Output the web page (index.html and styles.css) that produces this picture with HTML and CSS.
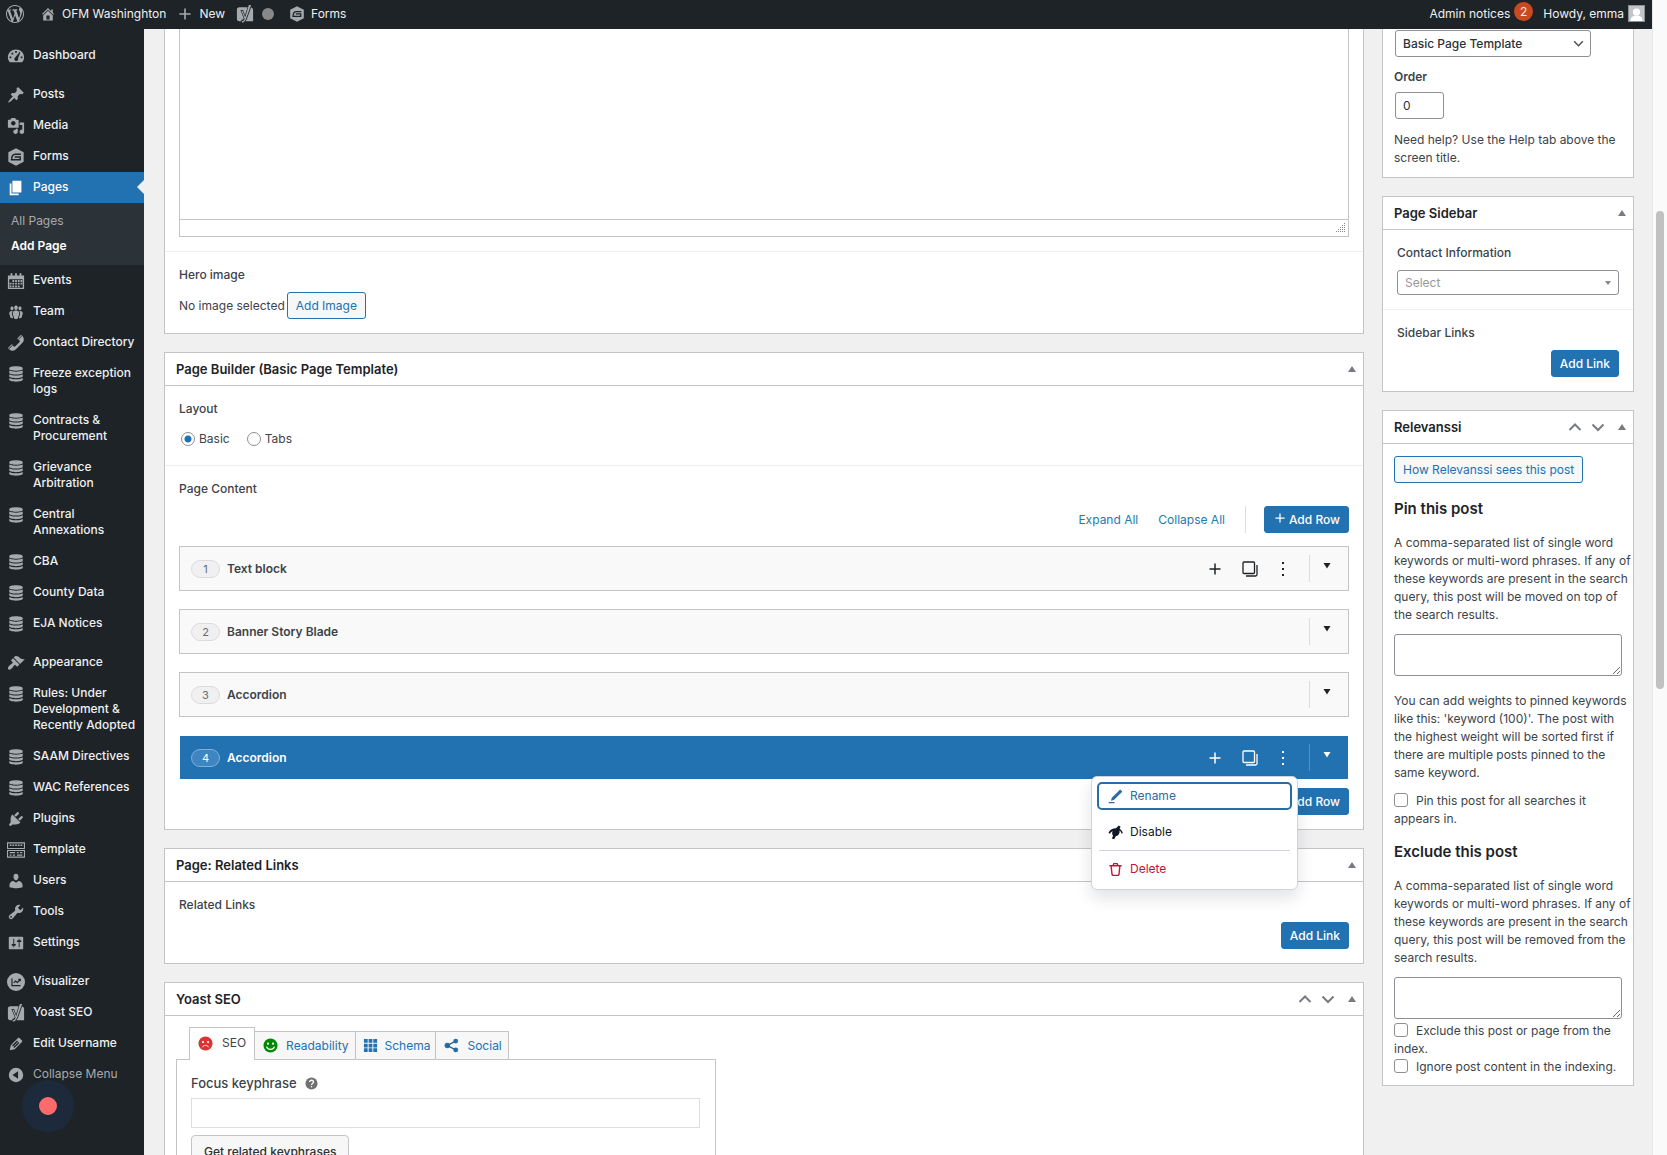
FILE: index.html
```html
<!DOCTYPE html>
<html lang="en">
<head>
<meta charset="utf-8">
<meta name="viewport" content="width=device-width, initial-scale=1">
<title>Edit Page - OFM Washinghton</title>
<link rel="stylesheet" href="styles.css">
</head>
<body>
<svg class="sprite" aria-hidden="true">
  <symbol id="i-wp" viewBox="0 0 20 20"><path d="M20 10c0-5.51-4.49-10-10-10C4.48 0 0 4.49 0 10c0 5.52 4.48 10 10 10 5.51 0 10-4.48 10-10zM7.78 15.37L4.37 6.22c.55-.02 1.17-.08 1.17-.08.5-.06.44-1.13-.06-1.11 0 0-1.45.11-2.37.11-.18 0-.37 0-.58-.01C4.12 2.69 6.87 1.11 10 1.11c2.33 0 4.45.87 6.05 2.34-.68-.11-1.65.39-1.65 1.58 0 .74.45 1.36.9 2.1.35.61.55 1.36.55 2.46 0 1.49-1.4 5-1.4 5l-3.03-8.37c.54-.02.82-.17.82-.17.5-.05.44-1.25-.06-1.22 0 0-1.44.12-2.38.12-.87 0-2.33-.12-2.33-.12-.5-.03-.56 1.2-.06 1.22l.92.08 1.26 3.41zM17.41 10c.24-.64.74-1.87.43-4.25.7 1.29 1.05 2.71 1.05 4.25 0 3.29-1.73 6.24-4.4 7.78.97-2.59 1.94-5.2 2.92-7.78zM6.1 18.09C3.12 16.65 1.11 13.53 1.11 10c0-1.3.23-2.48.72-3.59C3.25 10.3 4.67 14.2 6.1 18.09zm4.03-6.63l2.58 6.98c-.86.29-1.76.45-2.71.45-.79 0-1.57-.11-2.29-.33.81-2.38 1.62-4.74 2.42-7.1z"/></symbol>
  <symbol id="i-home" viewBox="0 0 20 20"><path d="M16 8.5l1.53 1.53-1.06 1.06L10 4.6l-6.47 6.49-1.06-1.06L10 2.5l4 4v-2h2v4zm-6-2.46l6 5.99V18H4v-5.97zM12 17v-5H8v5h4z"/></symbol>
  <symbol id="i-plus" viewBox="0 0 20 20"><path d="M17 9v2h-6v6H9v-6H3V9h6V3h2v6h6z"/></symbol>
  <symbol id="i-yoast" viewBox="0 0 20 20"><path fill-rule="evenodd" d="M3.500 2.500h9.400L10 11.500 7.800 5.500H5l3.600 9.200c-.5 1.200-1.200 1.700-2.700 1.800V18H3.500C2.100 18 1 16.900 1 15.500V5c0-1.400 1.100-2.500 2.500-2.500zM16.700 2.700c1.400.3 2.300 1.200 2.300 2.800V18h-8.600c.9-.9 1.400-1.800 1.900-3z"/><path d="M14.300 0h2.500L11.500 14.500c-1.100 3-2.300 5-5 5.200v-1.600c1.700-.3 2.500-1.400 3-2.800L6.100 6.500h1.200l2.900 7z"/></symbol>
  <symbol id="i-forms" viewBox="0 0 20 20"><path d="M10 .3l8.500 4.300v10.800L10 19.700l-8.500-4.300V4.600z"/><path d="M15.500 6.900H9C6.300 6.900 5.200 8.800 5 13h9.700V9.900H8.500" fill="none" stroke="#1d2327" stroke-width="1.600"/></symbol>
  <symbol id="i-dash" viewBox="0 0 20 20"><path fill-rule="evenodd" d="M3.300 17h13.400c1.500-1.600 2.300-3.500 2.300-5.600C19 6.500 15 2.800 10 2.800S1 6.500 1 11.400c0 2.100.8 4 2.300 5.600zM9 4.500h2v2H9zM5 6.300h2v2H5zM2.800 10.500h2v2h-2zM15.200 10.500h2v2h-2zM14 5.500l.8.600-2.500 6.300c.8 1.600-.4 3.100-1.900 3.100-1.800 0-3-2-1.600-3.600z"/></symbol>
  <symbol id="i-pin" viewBox="0 0 20 20"><path d="M10.440 3.020l1.820-1.820 6.360 6.350-1.830 1.820c-1.050-.68-2.480-.57-3.410.36l-.75.75c-.92.93-1.040 2.350-.35 3.410l-1.830 1.820-2.410-2.410-2.800 2.790c-.42.42-3.380 2.710-3.800 2.290s1.860-3.390 2.280-3.810l2.790-2.790L4.100 9.360l1.830-1.820c1.050.69 2.480.57 3.400-.36l.75-.75c.93-.92 1.050-2.350.36-3.410z"/></symbol>
  <symbol id="i-media" viewBox="0 0 20 20"><path d="M13 11V4c0-.55-.45-1-1-1h-1.670L9 1H5L3.670 3H2c-.55 0-1 .45-1 1v7c0 .55.45 1 1 1h10c.55 0 1-.45 1-1zM7 4.500c1.380 0 2.500 1.120 2.500 2.500S8.380 9.500 7 9.500 4.500 8.380 4.500 7 5.620 4.500 7 4.500zM14 6h5v10.500c0 1.380-1.120 2.500-2.500 2.500S14 17.880 14 16.500s1.120-2.500 2.500-2.500c.17 0 .34.02.5.05V9h-3V6zm-4 8.050V13h2v3.500c0 1.380-1.120 2.500-2.500 2.500S7 17.880 7 16.500 8.120 14 9.500 14c.17 0 .34.02.5.05z"/></symbol>
  <symbol id="i-page" viewBox="0 0 20 20"><path d="M6 15V2h10v13H6zm-1 1h8v2H3V5h2v11z"/></symbol>
  <symbol id="i-cal" viewBox="0 0 20 20"><path fill-rule="evenodd" d="M1 4h3V2c0-.6.400-1 1-1s1 .4 1 1v2h3V2c0-.6.400-1 1-1s1 .4 1 1v2h3V2c0-.6.400-1 1-1s1 .4 1 1v2h3v15H1zM2.500 8v9.500h15V8zM6 9h2v2H6zm3 0h2v2H9zm3 0h2v2h-2zm3 0h2v2h-2zM3 12h2v2H3zm3 0h2v2H6zm3 0h2v2H9zm3 0h2v2h-2zm3 0h2v2h-2zM3 15h2v2H3zm3 0h2v2H6zm3 0h2v2H9zm3 0h2v2h-2z"/></symbol>
  <symbol id="i-group" viewBox="0 0 20 20"><path d="M8.030 4.460c-.29 1.280.55 3.460 1.970 3.460 1.410 0 2.250-2.180 1.960-3.460-.22-.98-1.080-1.630-1.960-1.630-.89 0-1.740.65-1.970 1.630zm-4.130.9c-.25 1.080.47 2.930 1.670 2.930s1.920-1.850 1.670-2.930c-.19-.83-.92-1.390-1.670-1.390s-1.480.56-1.670 1.390zm8.860 0c-.25 1.080.47 2.930 1.660 2.930 1.200 0 1.920-1.850 1.670-2.930-.19-.83-.92-1.390-1.670-1.390-.74 0-1.470.56-1.660 1.390zm-.59 11.430l1.250-4.300C14.200 10 12.710 8.470 10 8.470c-2.720 0-4.210 1.530-3.440 4.020l1.260 4.300C8.050 17.510 9 18 10 18c.98 0 1.940-.49 2.170-1.210zm-6.100-7.630c-.49.67-.96 1.830-.42 3.590l1.120 3.790c-.34.2-.77.31-1.200.31-.85 0-1.650-.41-1.850-1.030l-1.070-3.650c-.65-2.110.61-3.400 2.920-3.400.27 0 .54.02.79.06-.1.1-.2.22-.29.33zm8.350-.39c2.310 0 3.580 1.290 2.920 3.400l-1.070 3.650c-.2.62-1 1.030-1.850 1.030-.43 0-.86-.11-1.200-.31l1.110-3.770c.55-1.780.08-2.940-.42-3.610-.08-.11-.18-.23-.28-.33.25-.04.51-.06.79-.06z"/></symbol>
  <symbol id="i-phone" viewBox="0 0 20 20"><path d="M12.060 6l-.21-.2c-.52-.54-.43-.79.08-1.300l2.720-2.750c.81-.82.96-1.210 1.730-.48l.21.200zm.53.450l4.400-4.400c.7.940 2.340 3.470 1.530 5.340-.73 1.670-1.090 1.750-2 3-1.850 2.110-4.180 4.370-6 6.070-1.260.91-1.310 1.330-3 2-1.800.71-4.400-.89-5.380-1.560l4.400-4.400 1.180 1.620c.34.46 1.200-.06 1.800-.66 1.040-1.050 3.180-3.180 4-4.070.59-.59 1.120-1.450.66-1.800zM1.570 16.500l-.21-.21c-.68-.74-.29-.9.52-1.700l2.740-2.720c.51-.49.75-.6 1.270-.11l.2.210z"/></symbol>
  <symbol id="i-db" viewBox="0 0 20 20"><path d="M10 1.500c4.300 0 7.500.9 7.500 2.100v.8c0 1.100-3.200 1.900-7.500 1.900s-7.500-.8-7.500-1.900v-.8c0-1.200 3.200-2.100 7.500-2.100zM2.500 6.200c1.500.8 4.200 1.300 7.500 1.300s6-.5 7.500-1.300v2.300c0 1.200-3.200 2.100-7.500 2.100s-7.500-.9-7.500-2.100zM2.500 10.300c1.500.9 4.200 1.400 7.500 1.400s6-.5 7.500-1.400v2.300c0 1.200-3.200 2.100-7.500 2.100s-7.500-.9-7.500-2.100zM2.500 14.400c1.500.9 4.200 1.400 7.500 1.400s6-.5 7.500-1.400v2c0 1.200-3.200 2.100-7.500 2.100s-7.500-.9-7.500-2.100z"/></symbol>
  <symbol id="i-brush" viewBox="0 0 20 20"><path d="M14.480 11.060L7.410 3.990l1.500-1.500c.5-.56 2.300-.47 3.510.32 1.210.8 1.430 1.280 2.910 2.100 1.180.64 2.450 1.260 4.450.85zm-.71.71L6.700 4.700 4.930 6.470c-.39.39-.39 1.020 0 1.410l1.060 1.060c.39.39.39 1.030 0 1.420-.6.600-1.430 1.110-2.210 1.690-.35.26-.7.53-1.010.84C1.430 14.230.4 16.080 1.400 17.070c.99 1 2.840-.03 4.180-1.360.31-.31.58-.66.85-1.020.57-.78 1.080-1.610 1.690-2.210.39-.39 1.020-.39 1.410 0l1.060 1.060c.39.39 1.020.39 1.410 0z"/></symbol>
  <symbol id="i-plug" viewBox="0 0 20 20"><path d="M13.110 4.360L9.870 7.600 8 5.730l3.240-3.240c.35-.34 1.050-.2 1.560.32.52.51.66 1.210.31 1.550zm-8 1.770l.91-1.120 9.010 9.010-1.190.84c-.71.71-2.630 1.160-3.820 1.160H6.140L4.900 17.260c-.59.59-1.540.59-2.120 0-.59-.58-.59-1.530 0-2.120l1.240-1.240v-3.880c0-1.130.4-3.190 1.090-3.890zm7.260 3.970l3.240-3.240c.34-.35 1.040-.21 1.550.31.52.51.66 1.210.31 1.550l-3.240 3.250z"/></symbol>
  <symbol id="i-tmpl" viewBox="0 0 20 20"><path fill-rule="evenodd" d="M0 1.500h20V9H0zM1.200 2.700v5.100h17.600V2.700zM0 10h20v8.500H0zM1.200 11.200v6.100h17.600v-6.100zM3 4h2v1.500H3zm3 0h2v1.500H6zm3 0h2v1.500H9zm3 0h2v1.500h-2zm3 0h2v1.500h-2zM3 12.300h6v1.400H3zM11 12.300h2v1.400h-2zM14.500 12.300H17v1.400h-2.500zM3 15h2v1.300H3zM6.500 15H9v1.300H6.500zM11 15h6v1.300h-6z"/></symbol>
  <symbol id="i-user" viewBox="0 0 20 20"><path d="M10 9.250c-2.270 0-2.730-3.440-2.730-3.440C7 4.020 7.820 2 9.970 2c2.160 0 2.980 2.020 2.710 3.810 0 0-.41 3.440-2.680 3.440zm0 2.570L12.720 10c2.390 0 4.520 2.330 4.520 4.530v2.490s-3.650 1.130-7.240 1.130c-3.650 0-7.240-1.130-7.240-1.130v-2.490c0-2.250 1.940-4.480 4.470-4.480z"/></symbol>
  <symbol id="i-tool" viewBox="0 0 20 20"><path d="M16.680 9.770c-1.340 1.340-3.300 1.670-4.950.99l-5.410 6.520c-.99.99-2.590.99-3.580 0s-.99-2.590 0-3.570l6.520-5.420c-.68-1.650-.35-3.610.99-4.950 1.280-1.280 3.120-1.620 4.720-1.060l-2.890 2.890 2.820 2.820 2.860-2.870c.53 1.580.18 3.390-1.080 4.650zM3.810 16.210c.4.390 1.040.39 1.430 0 .4-.4.4-1.040 0-1.430-.39-.4-1.030-.4-1.430 0-.39.390-.39 1.030 0 1.430z"/></symbol>
  <symbol id="i-set" viewBox="0 0 20 20"><path d="M18 16V4c0-.55-.45-1-1-1H3c-.55 0-1 .45-1 1v12c0 .55.45 1 1 1h14c.55 0 1-.45 1-1zM8 11h1c.55 0 1 .45 1 1s-.45 1-1 1H8v1.500c0 .28-.22.5-.5.5s-.5-.22-.5-.5V13H6c-.55 0-1-.45-1-1s.45-1 1-1h1V5.500c0-.28.22-.5.5-.5s.5.22.5.5V11zm5-2h-1c-.55 0-1-.45-1-1s.45-1 1-1h1V5.500c0-.28.22-.5.5-.5s.5.22.5.5V7h1c.55 0 1 .45 1 1s-.45 1-1 1h-1v5.500c0 .28-.22.5-.5.5s-.5-.22-.5-.5V9z"/></symbol>
  <symbol id="i-vis" viewBox="0 0 20 20"><circle cx="10" cy="10" r="10"/><path d="M5.500 6v8h9.500M7.500 11l2-2 2 1.500L14.500 7.500M12.500 7h2.300v2.300" fill="none" stroke="#1d2327" stroke-width="1.300"/></symbol>
  <symbol id="i-edit" viewBox="0 0 20 20"><path d="M13.890 3.390l2.710 2.720c.46.46.42 1.240.03 1.640l-8.010 8.020-5.560 1.160 1.160-5.580s7.600-7.630 7.990-8.030c.39-.39 1.220-.39 1.680.07zm-2.730 2.790l-5.590 5.610 1.110 1.110 5.540-5.650zm-2.970 8.230l5.580-5.600-1.070-1.080-5.590 5.600z"/></symbol>
  <symbol id="i-coll" viewBox="0 0 20 20"><path fill-rule="evenodd" d="M10 2a8 8 0 1 1 0 16 8 8 0 0 1 0-16zm2.300 3.800L6 10l6.300 4.200z"/></symbol>
  <symbol id="i-up" viewBox="0 0 14 14"><path d="M1.500 10L7 4.500l5.500 5.500" fill="none" stroke="currentColor" stroke-width="2"/></symbol>
  <symbol id="i-down" viewBox="0 0 14 14"><path d="M1.500 4.500L7 10l5.500-5.500" fill="none" stroke="currentColor" stroke-width="2"/></symbol>
  <symbol id="i-tri" viewBox="0 0 8 6"><path d="M4 0l4 6H0z"/></symbol>
  <symbol id="i-caret" viewBox="0 0 8 6"><path d="M.5 0h7L4 5.500z"/></symbol>
  <symbol id="i-add" viewBox="0 0 12 12"><path d="M6 .5v11M.5 6h11" fill="none" stroke="currentColor" stroke-width="1.500"/></symbol>
  <symbol id="i-copy" viewBox="0 0 16 16"><path d="M2 1h9.500a1 1 0 0 1 1 1v9.500a1 1 0 0 1-1 1H2a1 1 0 0 1-1-1V2a1 1 0 0 1 1-1zM15 4v9.500a1.500 1.500 0 0 1-1.500 1.500H4" fill="none" stroke="currentColor" stroke-width="1.300"/></symbol>
  <symbol id="i-dots" viewBox="0 0 4 14"><path d="M1 0h2v2H1zM1 6h2v2H1zM1 12h2v2H1z"/></symbol>
</svg>

<header class="adminbar">
  <a href="#" class="bar-item bar-logo" aria-label="About WordPress"><svg class="ic18"><use href="#i-wp"/></svg></a>
  <a href="#" class="bar-item"><svg class="ic16"><use href="#i-home"/></svg>OFM Washinghton</a>
  <a href="#" class="bar-item"><svg class="ic16"><use href="#i-plus"/></svg>New</a>
  <a href="#" class="bar-item bar-yoast" aria-label="Yoast SEO"><svg class="ic18"><use href="#i-yoast"/></svg><span class="score"></span></a>
  <a href="#" class="bar-item"><svg class="ic16"><use href="#i-forms"/></svg>Forms</a>
  <div class="bar-right">
    <a href="#" class="bar-item">Admin notices<span class="count">2</span></a>
    <a href="#" class="bar-item">Howdy, emma
      <svg class="avatar" viewBox="0 0 17 17"><rect width="17" height="17" fill="#c3c4c7"/><circle cx="8.500" cy="7" r="3.600" fill="#fff"/><path d="M2.500 16c0-4 2.500-5.500 6-5.500s6 1.500 6 5.500z" fill="#fff"/><rect x=".5" y=".5" width="16" height="16" fill="none" stroke="#8c8f94"/></svg></a>
  </div>
</header>

<div class="shell">
  <nav class="menu" aria-label="Main menu">
    <a href="#"><svg><use href="#i-dash"/></svg><span>Dashboard</span></a>
    <hr>
    <a href="#"><svg><use href="#i-pin"/></svg><span>Posts</span></a>
    <a href="#"><svg><use href="#i-media"/></svg><span>Media</span></a>
    <a href="#"><svg><use href="#i-forms"/></svg><span>Forms</span></a>
    <a href="#" class="current"><svg><use href="#i-page"/></svg><span>Pages</span></a>
    <div class="submenu"><a href="#">All Pages</a><a href="#" class="on">Add Page</a></div>
    <a href="#"><svg><use href="#i-cal"/></svg><span>Events</span></a>
    <a href="#"><svg><use href="#i-group"/></svg><span>Team</span></a>
    <a href="#"><svg><use href="#i-phone"/></svg><span>Contact Directory</span></a>
    <a href="#"><svg><use href="#i-db"/></svg><span>Freeze exception logs</span></a>
    <a href="#"><svg><use href="#i-db"/></svg><span>Contracts &amp; Procurement</span></a>
    <a href="#"><svg><use href="#i-db"/></svg><span>Grievance Arbitration</span></a>
    <a href="#"><svg><use href="#i-db"/></svg><span>Central Annexations</span></a>
    <a href="#"><svg><use href="#i-db"/></svg><span>CBA</span></a>
    <a href="#"><svg><use href="#i-db"/></svg><span>County Data</span></a>
    <a href="#"><svg><use href="#i-db"/></svg><span>EJA Notices</span></a>
    <hr>
    <a href="#"><svg><use href="#i-brush"/></svg><span>Appearance</span></a>
    <a href="#"><svg><use href="#i-db"/></svg><span>Rules: Under Development &amp; Recently Adopted</span></a>
    <a href="#"><svg><use href="#i-db"/></svg><span>SAAM Directives</span></a>
    <a href="#"><svg><use href="#i-db"/></svg><span>WAC References</span></a>
    <a href="#"><svg><use href="#i-plug"/></svg><span>Plugins</span></a>
    <a href="#"><svg><use href="#i-tmpl"/></svg><span>Template</span></a>
    <a href="#"><svg><use href="#i-user"/></svg><span>Users</span></a>
    <a href="#"><svg><use href="#i-tool"/></svg><span>Tools</span></a>
    <a href="#"><svg><use href="#i-set"/></svg><span>Settings</span></a>
    <hr>
    <a href="#"><svg><use href="#i-vis"/></svg><span>Visualizer</span></a>
    <a href="#"><svg><use href="#i-yoast"/></svg><span>Yoast SEO</span></a>
    <a href="#"><svg><use href="#i-edit"/></svg><span>Edit Username</span></a>
    <button type="button" class="collapse"><svg><use href="#i-coll"/></svg><span>Collapse Menu</span></button>
    <button type="button" class="recorder" aria-label="Record"></button>
  </nav>

  <main class="content">
    <div class="col-main">
      <section class="box box-top">
        <div class="field field-editor">
          <div class="editor">
            <textarea aria-label="Content"></textarea>
            <div class="statusbar"><svg viewBox="0 0 10 10"><path d="M8 0h1v1H8zM6 2h1v1H6zM8 2h1v1H8zM4 4h1v1H4zM6 4h1v1H6zM8 4h1v1H8zM2 6h1v1H2zM4 6h1v1H4zM6 6h1v1H6zM8 6h1v1H8zM0 8h1v1H0zM2 8h1v1H2zM4 8h1v1H4zM6 8h1v1H6zM8 8h1v1H8z"/></svg></div>
          </div>
        </div>
        <div class="field">
          <div class="label">Hero image</div>
          <div class="imgrow">No image selected <button type="button" class="btn ghost">Add Image</button></div>
        </div>
      </section>

      <section class="box">
        <div class="box-head"><h2>Page Builder (Basic Page Template)</h2><button type="button" aria-label="Toggle panel"><svg class="tri"><use href="#i-tri"/></svg></button></div>
        <div class="field">
          <div class="label">Layout</div>
          <div class="radios">
            <label><input type="radio" name="layout" checked>Basic</label>
            <label><input type="radio" name="layout">Tabs</label>
          </div>
        </div>
        <div class="field">
          <div class="label">Page Content</div>
          <div class="toolbar"><a href="#">Expand All</a><a href="#">Collapse All</a><span class="bar"></span><button type="button" class="btn primary"><svg><use href="#i-add"/></svg>Add Row</button></div>
          <div class="rows">
            <div class="row"><span class="num">1</span><b>Text block</b>
              <span class="acts"><button type="button" aria-label="Add row"><svg class="ic12"><use href="#i-add"/></svg></button><button type="button" aria-label="Duplicate"><svg class="ic16"><use href="#i-copy"/></svg></button><button type="button" aria-label="More"><svg class="dots"><use href="#i-dots"/></svg></button></span>
              <button type="button" class="tog" aria-label="Toggle"><svg class="tri"><use href="#i-caret"/></svg></button></div>
            <div class="row"><span class="num">2</span><b>Banner Story Blade</b><button type="button" class="tog" aria-label="Toggle"><svg class="tri"><use href="#i-caret"/></svg></button></div>
            <div class="row"><span class="num">3</span><b>Accordion</b><button type="button" class="tog" aria-label="Toggle"><svg class="tri"><use href="#i-caret"/></svg></button></div>
            <div class="row active"><span class="num">4</span><b>Accordion</b>
              <span class="acts"><button type="button" aria-label="Add row"><svg class="ic12"><use href="#i-add"/></svg></button><button type="button" aria-label="Duplicate"><svg class="ic16"><use href="#i-copy"/></svg></button><button type="button" aria-label="More"><svg class="dots"><use href="#i-dots"/></svg></button></span>
              <button type="button" class="tog" aria-label="Toggle"><svg class="tri"><use href="#i-caret"/></svg></button>
              <div class="popup" role="menu">
                <button type="button" role="menuitem" class="focus"><svg viewBox="0 0 16 16"><path d="M3.200 12.400l.8-3L10.600 2.800l2.400 2.300-6.700 6.700zM10.600 2.800l1.700-1.700c.4-.4.900-.4 1.300 0l1.100 1.100c.4.400.4.900 0 1.300L13 5.100zM.8 13.800H7v1.400H.8z"/></svg>Rename</button>
                <button type="button" role="menuitem"><svg viewBox="0 0 16 16"><path d="M.5 8.200C2.500 4.800 5 3.500 8.500 3.500L11.500.6l1.900 1.300-1 2.200c1.500.9 2.700 2.300 3.400 4.300l-1.200.9c-.6-1.700-1.300-2.800-2.300-3.500.5 2.800-.9 5.500-4 6.100L6.600 15.300l-2.500-.9 1.300-2.900C4.200 10 4.200 7.800 5 6.300 3.600 7 2.700 8 1.800 9.300z"/></svg>Disable</button>
                <hr>
                <button type="button" role="menuitem" class="del"><svg viewBox="0 0 16 16"><path d="M1.500 4h13M5.300 4l.9-2.300h3.600L10.700 4M3.300 4l1 9.300c.1.700.5 1 1.200 1h5c.7 0 1.100-.3 1.200-1l1-9.300" fill="none" stroke="currentColor" stroke-width="1.500"/></svg>Delete</button>
              </div></div>
          </div>
          <div class="toolbar"><button type="button" class="btn primary"><svg><use href="#i-add"/></svg>Add Row</button></div>
        </div>
      </section>

      <section class="box">
        <div class="box-head"><h2>Page: Related Links</h2><button type="button" aria-label="Toggle panel"><svg class="tri"><use href="#i-tri"/></svg></button></div>
        <div class="field"><div class="label">Related Links</div><div class="toolbar"><button type="button" class="btn primary">Add Link</button></div></div>
      </section>

      <section class="box">
        <div class="box-head"><h2>Yoast SEO</h2><button type="button" aria-label="Move up"><svg class="ic14"><use href="#i-up"/></svg></button><button type="button" aria-label="Move down"><svg class="ic14"><use href="#i-down"/></svg></button><button type="button" aria-label="Toggle panel"><svg class="tri"><use href="#i-tri"/></svg></button></div>
        <div class="yoast">
          <div class="tabs">
            <a href="#" class="on"><svg viewBox="0 0 16 16"><circle cx="8" cy="8" r="7.500" fill="#dc3232"/><circle cx="5.300" cy="6.500" r="1.100" fill="#fff"/><circle cx="10.700" cy="6.500" r="1.100" fill="#fff"/><path d="M4.700 12c1.200-2.600 5.400-2.600 6.600 0" stroke="#fff" fill="none"/></svg><span>SEO</span></a>
            <a href="#"><svg viewBox="0 0 16 16"><circle cx="8" cy="8" r="7.500" fill="#008a00"/><circle cx="5.300" cy="6" r="1.200" fill="#fff"/><circle cx="10.700" cy="6" r="1.200" fill="#fff"/><path d="M3.800 9.200c1.200 4 7.200 4 8.400 0" stroke="#fff" stroke-width="1.300" fill="none"/></svg><span>Readability</span></a>
            <a href="#" class="tight"><svg viewBox="0 0 16 16" fill="#2a7fb5"><path d="M1 1h4v4H1zM6 1h4v4H6zM11 1h4v4h-4zM1 6h4v4H1zM6 6h4v4H6zM11 6h4v4h-4zM1 11h4v4H1zM6 11h4v4H6zM11 11h4v4h-4z"/></svg><span>Schema</span></a>
            <a href="#"><svg viewBox="0 0 16 16" fill="#21659b"><circle cx="3.500" cy="8" r="2.900"/><circle cx="12.500" cy="3.300" r="2.600"/><circle cx="12.500" cy="12.700" r="2.600"/><path d="M12.500 3.300L3.500 8l9 4.700" fill="none" stroke="#21659b" stroke-width="1.500"/></svg><span>Social</span></a>
          </div>
          <div class="panel">
            <label for="kw">Focus keyphrase <svg viewBox="0 0 14 14"><circle cx="7" cy="7" r="6.500" fill="#707070"/><path d="M4.900 5.500c0-2.700 4.300-2.600 4.300 0C9.200 7 7 7 7 8.500M7 9.700v1.400" fill="none" stroke="#fff" stroke-width="1.400"/></svg></label>
            <input type="text" id="kw">
            <button type="button" class="related">Get related keyphrases</button>
          </div>
        </div>
      </section>
    </div>

    <aside class="col-side">
      <section class="box box-top attrs">
        <select class="tpl" aria-label="Template"><option>Basic Page Template</option></select>
        <label for="order">Order</label>
        <input type="text" id="order" value="0">
        <p>Need help? Use the Help tab above the screen title.</p>
      </section>

      <section class="box">
        <div class="box-head"><h2>Page Sidebar</h2><button type="button" aria-label="Toggle panel"><svg class="tri"><use href="#i-tri"/></svg></button></div>
        <div class="field"><label class="label" for="contact">Contact Information</label>
          <div class="pick"><select id="contact"><option>Select</option></select></div></div>
        <div class="field"><div class="label">Sidebar Links</div><div class="toolbar"><button type="button" class="btn primary">Add Link</button></div></div>
      </section>

      <section class="box">
        <div class="box-head"><h2>Relevanssi</h2><button type="button" aria-label="Move up"><svg class="ic14"><use href="#i-up"/></svg></button><button type="button" aria-label="Move down"><svg class="ic14"><use href="#i-down"/></svg></button><button type="button" aria-label="Toggle panel"><svg class="tri"><use href="#i-tri"/></svg></button></div>
        <div class="relevanssi">
          <button type="button" class="btn ghost">How Relevanssi sees this post</button>
          <h3>Pin this post</h3>
          <p>A comma-separated list of single word keywords or multi-word phrases. If any of these keywords are present in the search query, this post will be moved on top of the search results.</p>
          <textarea aria-label="Pin keywords"></textarea>
          <p class="spaced">You can add weights to pinned keywords like this: 'keyword (100)'. The post with the highest weight will be sorted first if there are multiple posts pinned to the same keyword.</p>
          <label class="spaced"><input type="checkbox">Pin this post for all searches it appears in.</label>
          <h3>Exclude this post</h3>
          <p>A comma-separated list of single word keywords or multi-word phrases. If any of these keywords are present in the search query, this post will be removed from the search results.</p>
          <textarea aria-label="Exclude keywords"></textarea>
          <label class="near"><input type="checkbox">Exclude this post or page from the index.</label>
          <label><input type="checkbox">Ignore post content in the indexing.</label>
        </div>
      </section>
    </aside>
  </main>
</div>
<div class="scroll" aria-hidden="true"><div class="thumb"></div></div>
</body>
</html>
```
FILE: styles.css
```css
*, *::before, *::after { box-sizing: border-box; }
body {
  margin: 0;
  height: 100vh;
  overflow: hidden;
  padding-right: 15px;
  background: #f0f0f1;
  color: #3c434a;
  font: 12px/18px Inter, "Liberation Sans", sans-serif;
}
a { color: #2271b1; text-decoration: none; }
button, input, select, textarea { font: inherit; color: inherit; margin: 0; }
button { border: 0; padding: 0; background: none; cursor: pointer; }
svg { display: block; flex: none; fill: currentColor; }
h2, h3, p { margin: 0; }
.sprite { position: absolute; width: 0; height: 0; }
.ic12 { width: 12px; height: 12px; }
.ic14 { width: 14px; height: 14px; }
.ic16 { width: 16px; height: 16px; }
.ic18 { width: 18px; height: 18px; }
.tri { width: 8px; height: 6px; }
.dots { width: 8px; height: 14px; }

/* Admin bar */
.adminbar {
  display: flex;
  align-items: center;
  gap: 11px;
  height: 29px;
  padding: 0 7px 2px 6px;
  background: #1d2327;
}
.bar-item { display: flex; align-items: center; gap: 6px; color: #f0f0f1; line-height: 16px; }
.bar-item > svg { color: #a7aaad; }
.bar-logo { margin-right: 5px; }
.bar-yoast { gap: 8px; margin-right: 4px; }
.score { width: 12px; height: 12px; border-radius: 50%; background: #888; }
.bar-right { display: flex; gap: 10px; margin-left: auto; }
.bar-right .bar-item { gap: 4px; }
.count {
  width: 19px;
  height: 19px;
  margin-bottom: 4px;
  border-radius: 50%;
  background: #ca4a1f;
  line-height: 19px;
  text-align: center;
}
.avatar { width: 17px; height: 17px; }

/* Left menu */
.shell { display: flex; height: calc(100vh - 29px); }
.menu { position: relative; flex: none; width: 144px; padding-top: 11px; background: #1d2327; line-height: 16px; }
.menu > a, .collapse { display: flex; width: 100%; gap: 8px; padding: 7px 4px 8px 7px; color: #f0f0f1; font-weight: 500; text-align: left; }
.menu > a svg, .collapse svg { width: 18px; height: 18px; color: #a7aaad; margin-bottom: -2px; }
.menu > a span, .collapse span { flex: 1; }
.menu hr { height: 8px; margin: 0; border: 0; }
.menu > a.current { position: relative; background: #2271b1; color: #fff; }
.menu > a.current svg { color: #fff; }
.current::after {
  content: "";
  position: absolute;
  right: 0;
  top: 8px;
  border: 7px solid transparent;
  border-left-width: 0;
  border-right-color: #f0f0f1;
}
.submenu { padding: 6px 0; background: #2c3338; }
.submenu a { display: block; padding: 4px 11px 5px; color: #a7aaad; }
.submenu .on { color: #fff; font-weight: 600; }
.menu > .collapse { color: #a7aaad; font-weight: 400; }
.recorder {
  position: absolute;
  left: 22px;
  bottom: 23px;
  width: 52px;
  height: 52px;
  border: 17px solid #1d2a3c;
  border-radius: 50%;
  background: #ff6b6b;
}

/* Columns */
.content { display: flex; flex: 1; gap: 18px; min-width: 0; padding: 0 18px 0 20px; }
.col-main { flex: 1; min-width: 0; }
.col-side { flex: none; width: 252px; }
.box { margin-bottom: 18px; border: 1px solid #c3c4c7; background: #fff; }
.box-top { border-top: 0; }
.box-head { display: flex; align-items: center; gap: 9px; height: 33px; padding: 0 7px 0 11px; border-bottom: 1px solid #c3c4c7; color: #787c82; }
.box-head h2 { flex: 1; color: #1d2327; font-size: 13px; font-weight: 600; line-height: 18px; }
.box-head .tri { margin-left: 4px; }
.field { padding: 15px 14px 14px; border-top: 1px solid #eee; }
.box-head + .field { border-top: 0; }
.label { display: block; margin-bottom: 9px; font-weight: 500; line-height: 16px; }

.btn { display: inline-flex; align-items: center; justify-content: center; height: 27px; padding: 0 8px; border: 1px solid #2271b1; border-radius: 3px; white-space: nowrap; }
.ghost { background: #f6f7f7; color: #2271b1; }
.primary { gap: 4px; background: #2271b1; color: #fff; font-weight: 500; }
.primary svg { width: 10px; height: 10px; margin: 0 0 4px 2px; }

.field-editor { padding-top: 0; border-top: 0; }
.editor { border: 1px solid #c3c4c7; border-top: 0; }
.editor textarea { display: block; width: 100%; height: 190px; border: 0; resize: none; outline: 0; }
.statusbar { display: flex; justify-content: flex-end; align-items: center; height: 17px; padding-right: 2px; border-top: 1px solid #c3c4c7; color: #888; }
.statusbar svg { width: 10px; height: 10px; }
.imgrow { display: flex; align-items: center; gap: 2px; }

.radios { display: flex; align-items: center; gap: 17px; height: 25px; padding-left: 2px; }
.radios label { display: flex; align-items: center; gap: 4px; }
input[type="radio"], input[type="checkbox"] { appearance: none; width: 14px; height: 14px; border: 1px solid #8c8f94; background: #fff; }
input[type="radio"] { border-radius: 50%; }
input[type="radio"]:checked { background: radial-gradient(circle, #2271b1 3px, #fff 4px); }
input[type="checkbox"] { margin-right: 8px; border-radius: 3px; vertical-align: -2px; }

.toolbar { display: flex; align-items: center; justify-content: flex-end; gap: 20px; }
.toolbar a { color: #217cb0; }
.toolbar .bar { align-self: stretch; width: 1px; margin-right: -2px; background: #ddd; }
.rows { display: grid; gap: 18px; margin: 13px 0 8px; }
.row { position: relative; display: flex; align-items: center; height: 45px; padding-left: 11px; border: 1px solid #c3c4c7; background: #f9f9f9; }
.row b { margin-left: 7px; font-weight: 600; }
.num { width: 29px; height: 18px; border: 1px solid #dcdcde; border-radius: 9px; background: #f0f0f1; color: #646970; font-size: 11px; line-height: 16px; text-align: center; }
.acts { display: flex; align-items: center; gap: 21px; margin-left: auto; margin-right: 22px; color: #1d2327; }
.row > .tog { display: flex; justify-content: center; width: 39px; height: 27px; margin-left: auto; padding: 8px 4px 0 0; border-left: 1px solid #dcdcde; color: #1d2327; }
.row > .acts + .tog { margin-left: 0; }
.row.active { border-color: #fff; background: #2271b1; background-clip: padding-box; color: #fff; }
.active .num { border-color: #7fb0da; background: #3f86c0; color: #fff; }
.active > .acts, .active > .tog { color: #fff; }
.active > .tog { border-color: #4f90c5; }
.popup {
  position: absolute;
  z-index: 2;
  top: 40px;
  right: 50px;
  width: 207px;
  padding: 5px 5px 6px;
  border: 1px solid #d0d5dd;
  border-radius: 6px;
  background: #fff;
  box-shadow: 0 8px 16px rgba(16, 24, 40, .12);
}
.popup button { display: flex; align-items: center; gap: 7px; width: 100%; height: 28px; padding: 0 9px; border: 2px solid transparent; border-radius: 5px; color: #101828; }
.popup button + button { margin-top: 8px; }
.popup svg { width: 15px; height: 15px; }
.popup hr { height: 1px; margin: 4px 2px; border: 0; background: #d0d5dd; }
.popup .focus { border-color: #2b6ca3; color: #2b6ca3; }
.popup .del { color: #c0143c; }

/* Yoast */
.yoast { padding: 11px; }
.tabs { display: flex; align-items: flex-end; padding-left: 13px; }
.tabs a { display: flex; align-items: center; gap: 8px; height: 28px; padding: 0 6px 0 8px; border: 1px solid #c3c4c7; border-bottom: 0; border-left: 0; background: #f7f7f7; }
.tabs .tight { gap: 7px; padding: 0 5px 0 7px; }
.tabs .on { z-index: 1; gap: 9px; height: 33px; margin-bottom: -1px; padding: 0 8px 2px; border-left: 1px solid #c3c4c7; background: #fff; color: #3c434a; }
.tabs svg { width: 15px; height: 15px; }
.panel { display: flex; flex-direction: column; align-items: flex-start; max-width: 540px; padding: 15px 15px 15px 14px; border: 1px solid #c3c4c7; }
.panel label { display: flex; align-items: center; gap: 8px; font-size: 13px; font-weight: 500; line-height: 16px; }
.panel label svg { width: 13px; height: 13px; }
.panel input { width: 100%; height: 30px; margin: 7px 0; border: 1px solid #ddd; }
.related { height: 34px; padding: 0 12px; border: 1px solid #c3c4c7; border-radius: 4px; background: #f7f7f7; font-weight: 500; color: #303030; }

/* Side column */
.attrs { padding: 1px 11px 10px; }
.tpl, #order, .pick select, .relevanssi textarea { display: block; border: 1px solid #8c8f94; border-radius: 3px; background: #fff; color: #2c3338; }
.tpl { appearance: none; width: 196px; height: 27px; margin-left: 1px; padding: 0 7px; font-weight: 500; background: #fff url("data:image/svg+xml,%3Csvg xmlns='http://www.w3.org/2000/svg' viewBox='0 0 12 8'%3E%3Cpath d='M1 1.500l5 5 5-5' fill='none' stroke='%23555' stroke-width='1.800'/%3E%3C/svg%3E") right 6px center / 11px 7px no-repeat; }
.attrs label { display: block; margin: 12px 0 7px; font-weight: 600; line-height: 16px; }
#order { width: 49px; height: 27px; margin-left: 1px; padding: 0 7px; }
.attrs p { margin-top: 12px; }
.pick select { appearance: none; width: 100%; height: 25px; padding: 0 7px; color: #999; background: #fff url("data:image/svg+xml,%3Csvg xmlns='http://www.w3.org/2000/svg' viewBox='0 0 6 4'%3E%3Cpath d='M0 0h6L3 4z' fill='%23888'/%3E%3C/svg%3E") right 7px center / 6px 4px no-repeat; }
.relevanssi { padding: 12px 11px 9px; }
.relevanssi h3 { margin: 15px 0; color: #1d2327; font-size: 15px; font-weight: 600; line-height: 21px; }
.relevanssi p { margin-right: -11px; }
.relevanssi textarea { width: 100%; height: 42px; margin-top: 10px; }
.relevanssi label { display: block; }
.relevanssi label.spaced { margin-top: 10px; }
.relevanssi p.spaced { margin-top: 16px; }
.relevanssi .spaced + h3 { margin-top: 13px; }
.relevanssi .near { margin-top: 3px; }

/* Page scrollbar */
.scroll { position: fixed; top: 0; right: 0; bottom: 0; width: 15px; border-left: 1px solid #e8e8e8; background: #fafafa; }
.thumb { width: 8px; height: 478px; margin: 211px 0 0 3px; border-radius: 4px; background: #c1c1c1; }
```
